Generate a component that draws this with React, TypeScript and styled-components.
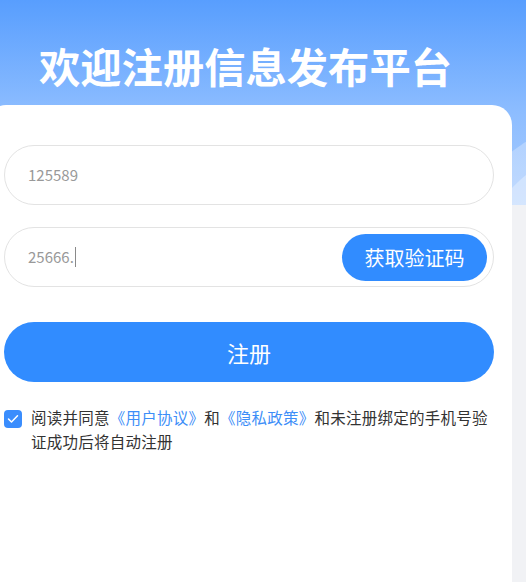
import React from 'react';
import styled, { createGlobalStyle } from 'styled-components';

const Global = createGlobalStyle`
  html, body { margin: 0; padding: 0; background: #f1f2f5; }
  body {
    font-family: "Noto Sans CJK SC", "Noto Sans", sans-serif;
    overflow: hidden;
  }
  * { box-sizing: border-box; }
`;

const Page = styled.div`
  position: relative;
  width: 526px;
  height: 582px;
  overflow: hidden;
  background: #f1f2f5;
`;

const Header = styled.header`
  position: relative;
  height: 205px;
  overflow: hidden;
  padding: 41px 0 0 39px;
  background: linear-gradient(180deg, #589efe 0%, #8dbdff 55%, #a9ccfe 100%);
`;

const Bubble = styled.div<{ $left: number; $top: number; $size: number; $alpha: number }>`
  position: absolute;
  left: ${(p) => p.$left}px;
  top: ${(p) => p.$top}px;
  width: ${(p) => p.$size}px;
  height: ${(p) => p.$size}px;
  border-radius: 50%;
  background: rgba(255, 255, 255, ${(p) => p.$alpha});
`;

const Title = styled.h1`
  position: relative;
  margin: 0;
  font-size: 41.3px;
  font-weight: 700;
  line-height: 49px;
  color: #ffffff;
`;

const Card = styled.main`
  position: relative;
  z-index: 1;
  margin: -100px 0 0 -14px;
  width: 526px;
  height: 477px;
  padding: 40px 18px 0;
  background: #ffffff;
  border-radius: 20px 20px 0 0;
  display: flex;
  flex-direction: column;
`;

const Field = styled.div<{ $gap?: number }>`
  display: flex;
  align-items: center;
  height: 60px;
  width: 490px;
  margin-top: ${(p) => p.$gap ?? 0}px;
  padding: 0 6px 0 23px;
  border: 1px solid #e3e3e3;
  border-radius: 30px;
  background: #fff;
`;

const Value = styled.span`
  flex: 1;
  display: flex;
  align-items: center;
  font-size: 15px;
  color: #999999;
  line-height: 20px;
`;

const Caret = styled.span`
  display: inline-block;
  width: 1px;
  height: 20px;
  margin-left: 1px;
  background: #8a8a8a;
`;

const CodeButton = styled.button`
  width: 145px;
  height: 47px;
  border: none;
  border-radius: 24px;
  background: #318cff;
  color: #ffffff;
  font-family: inherit;
  font-size: 20px;
  padding: 0;
`;

const Submit = styled.button`
  width: 490px;
  height: 60px;
  margin-top: 35px;
  border: none;
  border-radius: 30px;
  background: #318cff;
  color: #ffffff;
  font-family: inherit;
  font-size: 22px;
  padding: 0;
`;

const Agreement = styled.div`
  display: flex;
  align-items: flex-start;
  gap: 9px;
  margin-top: 23px;
  width: 490px;
`;

const Check = styled.span`
  flex: none;
  display: flex;
  align-items: center;
  justify-content: center;
  width: 18px;
  height: 18px;
  margin-top: 5px;
  border-radius: 4px;
  background: #3a8dfd;
`;

const Text = styled.p`
  margin: 0;
  flex: 1;
  font-size: 15.5px;
  line-height: 24px;
  letter-spacing: 0.25px;
  color: #333333;
`;

const Link = styled.span`
  color: #3d8ef8;
`;

export default function App() {
  return (
    <Page>
      <Global />
      <Header>
        <Bubble $left={450} $top={118} $size={320} $alpha={0.28} />
        <Bubble $left={470} $top={142} $size={300} $alpha={0.32} />
        <Title>欢迎注册信息发布平台</Title>
      </Header>
      <Card>
        <Field>
          <Value>125589</Value>
        </Field>
        <Field $gap={22}>
          <Value>
            25666.
            <Caret />
          </Value>
          <CodeButton>获取验证码</CodeButton>
        </Field>
        <Submit>注册</Submit>
        <Agreement>
          <Check>
            <svg width="12" height="10" viewBox="0 0 12 10" fill="none">
              <polyline points="1.5,5 4.5,8 10.5,1.8" stroke="#fff" strokeWidth="1.5" strokeLinecap="round" strokeLinejoin="round" />
            </svg>
          </Check>
          <Text>
            阅读并同意<Link>《用户协议》</Link>和<Link>《隐私政策》</Link>和未注册绑定的手机号验证成功后将自动注册
          </Text>
        </Agreement>
      </Card>
    </Page>
  );
}
